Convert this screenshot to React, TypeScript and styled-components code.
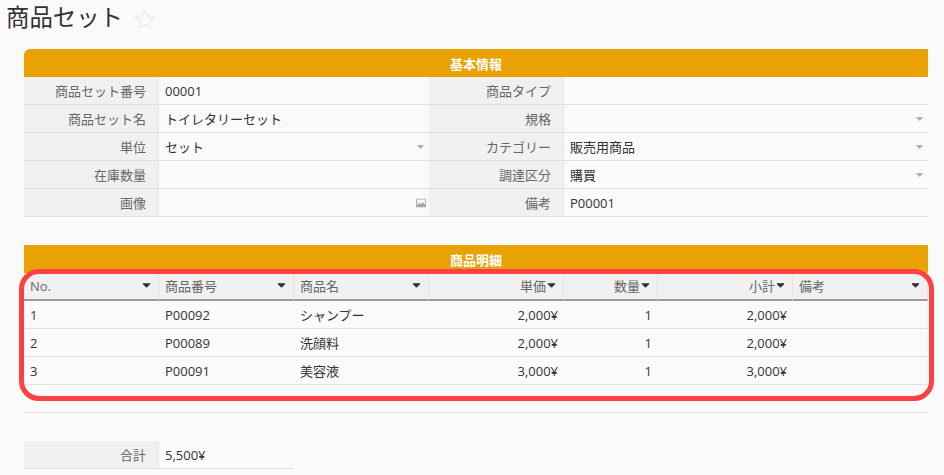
import * as React from 'react';
import styled, { createGlobalStyle } from 'styled-components';

const GlobalStyle = createGlobalStyle`
    html, body {
        margin: 0;
        padding: 0;
        background: #fafafa;
    }
    body {
        font-family: "Open Sans", "Noto Sans CJK JP", sans-serif;
        font-size: 13px;
        color: #333;
    }
`;

const Page = styled.div`
    width: 944px;
    height: 475px;
    overflow: hidden;
    box-sizing: border-box;
`;

const TitleRow = styled.div`
    display: flex;
    align-items: center;
    height: 38px;
    padding-left: 6px;
    margin-bottom: 11px;
    gap: 10px;
`;

const Title = styled.h1`
    margin: 0;
    font-size: 23.4px;
    font-weight: 400;
    line-height: 34px;
    padding-bottom: 4px;
    color: #333;
`;

const Section = styled.section<{ $gap?: number }>`
    position: relative;
    margin: 0 16px ${({ $gap }) => $gap || 0}px 24px;
`;

const SectionBar = styled.div<{ $rounded?: boolean }>`
    height: 28px;
    line-height: 30px;
    background: #e8a204;
    color: #fff;
    font-size: 13px;
    font-weight: 700;
    text-align: center;
    border-radius: ${({ $rounded }) => ($rounded ? '6px 0 0 0' : '0')};
`;

const FormGrid = styled.div<{ $columns: string; $width?: number }>`
    display: grid;
    grid-template-columns: ${({ $columns }) => $columns};
    grid-auto-rows: 28px;
    width: ${({ $width }) => ($width ? `${$width}px` : 'auto')};
`;

const Label = styled.div`
    box-sizing: border-box;
    padding-right: 12px;
    text-align: right;
    line-height: 28px;
    color: #666;
    background: #f0f0f0;
    border-right: 1px solid #e8e8e8;
    border-bottom: 1px solid #e0e0e0;
`;

const Value = styled.div`
    position: relative;
    box-sizing: border-box;
    padding: 0 6px;
    line-height: 28px;
    color: #333;
    border-bottom: 1px solid #e0e0e0;
`;

const FieldIcon = styled.svg<{ $right: number }>`
    position: absolute;
    right: ${({ $right }) => $right}px;
    top: 50%;
    transform: translateY(-50%);
`;

const HeaderRow = styled.div`
    display: grid;
    grid-template-columns: 135px 135px 135px 135px 94px 135px 135px;
    height: 28px;
`;

const HeaderCell = styled.div<{ $right?: boolean }>`
    box-sizing: border-box;
    display: flex;
    align-items: center;
    justify-content: ${({ $right }) => ($right ? 'flex-end' : 'space-between')};
    gap: 1px;
    padding: 0 7px 1px 6px;
    color: #666;
    background: #f0f0f0;
    border-right: 1px solid #e4e4e4;
    border-bottom: 2px solid #999;
`;

const BodyRow = styled.div`
    display: grid;
    grid-template-columns: 135px 135px 135px 135px 94px 135px 135px;
    height: 28px;
    border-bottom: 1px solid #e0e0e0;
    box-sizing: border-box;
`;

const BodyCell = styled.div<{ $right?: boolean }>`
    padding: 0 6px;
    line-height: 28px;
    color: #333;
    text-align: ${({ $right }) => ($right ? 'right' : 'left')};
`;

const Divider = styled.div`
    height: 27px;
    border-bottom: 1px solid #e4e4e4;
    margin-bottom: 28px;
`;

const Highlight = styled.div`
    position: absolute;
    left: -5px;
    right: -6px;
    top: 24px;
    bottom: -16px;
    border: 5px solid #fd4044;
    border-radius: 20px;
    pointer-events: none;
`;

const StarIcon = () => (
    <svg width="23" height="23" viewBox="0 0 22 22">
        <path
            d="M11 2.2l2.6 5.900 6.400.6-4.800 4.300 1.400 6.300L11 16.100l-5.600 3.200 1.400-6.300L2 8.700l6.400-.6z"
            fill="none"
            stroke="#efefef"
            strokeWidth="1.8"
            strokeLinejoin="round"
        />
    </svg>
);

const SelectCaret = () => (
    <FieldIcon $right={5} width="7" height="4" viewBox="0 0 7 4">
        <path d="M.5.5h6L3.500 3.500z" fill="#a6a6a6" stroke="#a6a6a6" strokeWidth=".6" strokeLinejoin="round" />
    </FieldIcon>
);

const ImageIcon = () => (
    <FieldIcon $right={3} width="10" height="9" viewBox="0 0 11 10">
        <path
            fillRule="evenodd"
            d="M0 .8C0 .3.3 0 .8 0h9.400c.5 0 .8.3.8.8v8.400c0 .5-.3.8-.8.8H.8C.3 10 0 9.700 0 9.200zM1 1.200v6.300l2.600-2.700 1.700 1.600 2.100-2.300L10 6.700V1.200z"
            fill="#a8a8a8"
        />
    </FieldIcon>
);

const HeaderCaret = () => (
    <svg width="9" height="5" viewBox="0 0 9 5">
        <path d="M1 .8h7L4.500 4.300z" fill="#333" stroke="#333" strokeWidth="1" strokeLinejoin="round" />
    </svg>
);

type Field = { label: string; value?: string; icon?: 'select' | 'image' };

const fields: Field[] = [
    { label: '商品セット番号', value: '00001' },
    { label: '商品タイプ' },
    { label: '商品セット名', value: 'トイレタリーセット' },
    { label: '規格', icon: 'select' },
    { label: '単位', value: 'セット', icon: 'select' },
    { label: 'カテゴリー', value: '販売用商品', icon: 'select' },
    { label: '在庫数量' },
    { label: '調達区分', value: '購買', icon: 'select' },
    { label: '画像', icon: 'image' },
    { label: '備考', value: 'P00001' },
];

const columns = [
    { title: 'No.' },
    { title: '商品番号' },
    { title: '商品名' },
    { title: '単価', right: true },
    { title: '数量', right: true },
    { title: '小計', right: true },
    { title: '備考' },
];

const rows = [
    ['1', 'P00092', 'シャンプー', '2,000¥', '1', '2,000¥', ''],
    ['2', 'P00089', '洗顔料', '2,000¥', '1', '2,000¥', ''],
    ['3', 'P00091', '美容液', '3,000¥', '1', '3,000¥', ''],
];

export default function App() {
    return (
        <Page>
            <GlobalStyle />
            <TitleRow>
                <Title>商品セット</Title>
                <StarIcon />
            </TitleRow>

            <Section $gap={28}>
                <SectionBar $rounded>基本情報</SectionBar>
                <FormGrid $columns="135px 270px 135px 1fr">
                    {fields.map((field) => (
                        <React.Fragment key={field.label}>
                            <Label>{field.label}</Label>
                            <Value>
                                {field.value}
                                {field.icon === 'select' && <SelectCaret />}
                                {field.icon === 'image' && <ImageIcon />}
                            </Value>
                        </React.Fragment>
                    ))}
                </FormGrid>
            </Section>

            <Section>
                <SectionBar>商品明細</SectionBar>
                <HeaderRow>
                    {columns.map((column) => (
                        <HeaderCell key={column.title} $right={column.right}>
                            <span>{column.title}</span>
                            <HeaderCaret />
                        </HeaderCell>
                    ))}
                </HeaderRow>
                {rows.map((row) => (
                    <BodyRow key={row[0]}>
                        {row.map((text, index) => (
                            <BodyCell key={index} $right={columns[index].right}>
                                {text}
                            </BodyCell>
                        ))}
                    </BodyRow>
                ))}
                <Highlight />
            </Section>

            <Section>
                <Divider />
                <FormGrid $columns="135px 135px" $width={270}>
                    <Label>合計</Label>
                    <Value>5,500¥</Value>
                </FormGrid>
            </Section>
        </Page>
    );
}
